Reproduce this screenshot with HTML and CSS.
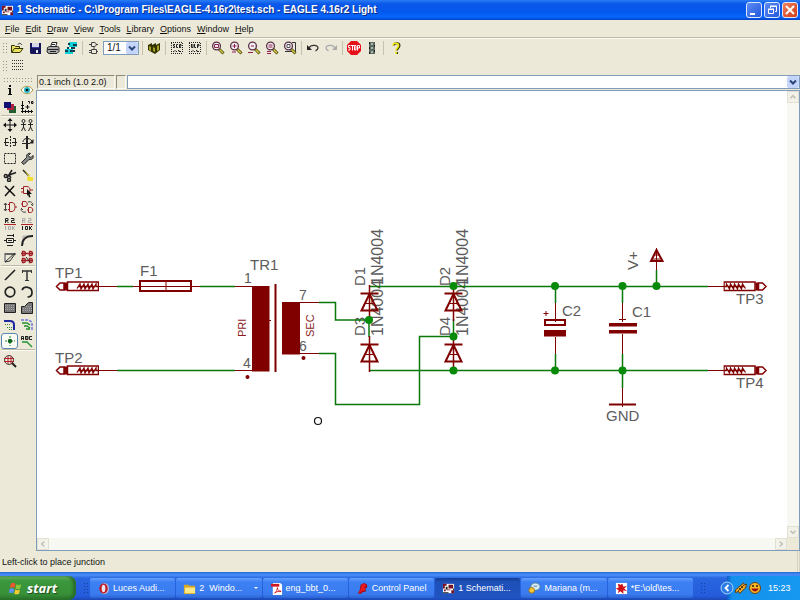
FILE: index.html
```html
<!DOCTYPE html>
<html lang="en">
<head>
<meta charset="utf-8">
<title>1 Schematic - EAGLE 4.16r2 Light</title>
<link rel="stylesheet" href="styles.css">
</head>
<body>
<svg class="defs" aria-hidden="true">
  <symbol id="lens" viewBox="0 0 14 14">
    <path d="M8 8l4.500 4.500" stroke="#4a4a10" stroke-width="3"/>
    <path d="M8.500 8.500l3.500 3.500" stroke="#d8c840" stroke-width="1.500"/>
    <circle cx="5.500" cy="5" r="3.900" fill="#f4eef0" stroke="#5a3048" stroke-width="1.300"/>
  </symbol>
  <symbol id="app" viewBox="0 0 14 14">
    <path fill="#fff" d="M1 2h12v10H1z"/>
    <path fill="#7a1020" d="M1 2h4v2H3v3H1zM7 3h5v4H7zM2 8h2v2H2zM5 8h4v1H5zM10 9h3v3h-3z"/>
    <path fill="#222" d="M4 5h2v3H4zM8 4h1v1H8zM1 11h6v1H1zM12 7h1v2h-1z"/>
  </symbol>
  <symbol id="plug" viewBox="0 0 44 12">
    <g fill="none" stroke="#800000">
      <path stroke-width="1.500" d="M12.500 2h31v8.500h-31z"/>
      <path stroke-width="1.500" d="M9 3H5L1.500 6.500 5 10h4z"/>
      <path stroke-width="3" d="M10.500 2.500v8"/>
      <path stroke-width="1.300" d="M22 8.500l3-4.500 1 5 3-5 1 5 3-5 1 5 3-5 1 5 3-5v2.500h3M23 6.500h16"/>
    </g>
  </symbol>
  <symbol id="diode" viewBox="0 0 20 36">
    <g fill="none" stroke="#800000">
      <path stroke-width="1.500" d="M10 0v36"/>
      <path stroke-width="2" d="M1 8.500h18M10 9L2 25.500h16z"/>
      <path d="M6 18.500h8"/>
    </g>
  </symbol>
</svg>

<header class="titlebar">
  <svg class="app-icon"><use href="#app"/></svg>
  <h1>1 Schematic - C:\Program Files\EAGLE-4.16r2\test.sch - EAGLE 4.16r2 Light</h1>
  <div class="window-buttons">
    <button aria-label="Minimize"><svg viewBox="0 0 14 14"><path fill="#fff" d="M3 10h5v2H3z"/></svg></button>
    <button aria-label="Restore"><svg viewBox="0 0 14 14" fill="none" stroke="#fff"><path d="M5.500 5V3.500h6v5H10M3.500 6.500h5v4h-5z"/><path d="M5 3h7M3 6h6"/></svg></button>
    <button class="close" aria-label="Close"><svg viewBox="0 0 14 14" stroke="#fff" stroke-width="2"><path d="M3 3l8 8M11 3l-8 8"/></svg></button>
  </div>
</header>

<nav class="menubar">
  <button><u>F</u>ile</button><button><u>E</u>dit</button><button><u>D</u>raw</button><button><u>V</u>iew</button><button><u>T</u>ools</button><button><u>L</u>ibrary</button><button><u>O</u>ptions</button><button><u>W</u>indow</button><button><u>H</u>elp</button>
</nav>

<div class="toolbar">
  <i class="grip"></i>
  <button aria-label="Open"><svg viewBox="0 0 14 14"><path fill="#e8e060" stroke="#333300" d="M1.500 11.500v-7h3l1 1h4v2h3.500l-3 4z"/><path d="M2 11l2.500-3.500H13" stroke="#333300" fill="none"/><path d="M8 3.500c1-2 3-1 4 .5" stroke="#222" fill="none"/></svg></button>
  <button aria-label="Save"><svg viewBox="0 0 14 14"><path fill="#15155a" d="M2 2h11v11H3l-1-1z"/><path fill="#d8d8e8" d="M4 2h7v5H4z"/><path fill="#3a3aa0" d="M4 6h7v1H4z"/><path fill="#e8e8e8" d="M8 9h2v3H8z"/></svg></button>
  <button aria-label="Print"><svg viewBox="0 0 14 14"><path fill="#fff" stroke="#222" d="M4.500 6l1.500-4.500h5L9.500 6"/><path fill="#aaa" stroke="#222" d="M1.500 6.500l2-1h8l1.500 1v4l-2 2h-8l-2-1.500z"/><path stroke="#222" d="M2 8.500h10M4 10.500h6M6 3.500h3"/></svg></button>
  <button aria-label="Board"><svg viewBox="0 0 14 14"><path fill="#10d0d8" d="M5 1h8v5H5zM1 8h8v5H1z"/><path fill="#143c50" d="M4 2h2v2H4zM9 3h4v2H9zM7 6h4v2H7zM1 9h3v2H1zM6 9h5v2H6zM3 6h2v2H3z"/></svg></button>
  <i class="sep"></i>
  <button aria-label="Device"><svg viewBox="0 0 14 14" fill="none" stroke="#444"><path d="M4.500 1.500H7c3 0 3 4 0 4H4.500zM2 3.500h2M9 3.500h2M4.500 8.500h5v4h-5zM2 9.500h2M2 11.500h2M10 10.500h1M7 6v2"/></svg></button>
  <span class="combo sheet">
    <select aria-label="Sheet"><option>1/1</option></select>
    <svg viewBox="0 0 12 12"><path d="M3 4.500l3 3 3-3" fill="none" stroke="#294578" stroke-width="2"/></svg>
  </span>
  <i class="sep"></i>
  <button aria-label="Library"><svg viewBox="0 0 14 14"><path fill="#333300" d="M1 4l4-2v2l4-2v2l4-2v7l-5 4-7-4z"/><path fill="#a8a020" d="M2 5l2 1v4L2 9zM6 6l2 1v4L6 10zM10 5l2-1v5l-2 1z"/></svg></button>
  <i class="sep"></i>
  <button aria-label="Script"><svg viewBox="0 0 14 14"><path d="M1 1.500h12M1 12.500h12M1.500 2v10M12.500 2v10" stroke="#222" stroke-dasharray="1 1"/><path fill="none" stroke="#222" d="M5 3.500H3.500v1.500h1v1.500H3M8 3.500H6.500v3H8M9.500 7V3.500H11v1.500H9.500L11 7M3 10.500h1l1-1 1 1h1M8 9.500h1v1h2"/></svg></button>
  <button aria-label="ULP"><svg viewBox="0 0 14 14"><path d="M1 1.500h12M1 12.500h12M1.500 2v10M12.500 2v10" stroke="#222" stroke-dasharray="1 1"/><path fill="none" stroke="#222" d="M3.500 3v3.500H5V3M6.500 3v3.500H8M9.500 7V3.500H11v1.500H9.500M3 10.500h1l1-1 1 1h1M8 9.500h1v1h2"/></svg></button>
  <i class="sep"></i>
  <button aria-label="Zoom fit"><svg viewBox="0 0 14 14"><use href="#lens"/><path stroke="#902050" fill="none" d="M3.500 3.500h4v3h-4z"/></svg></button>
  <button aria-label="Zoom in"><svg viewBox="0 0 14 14"><use href="#lens"/><path stroke="#902050" d="M5.500 3v4M3.500 5h4M3 11h4"/></svg></button>
  <button aria-label="Zoom out"><svg viewBox="0 0 14 14"><use href="#lens"/><path stroke="#902050" d="M4 5h3M1 11.500h5"/></svg></button>
  <button aria-label="Zoom redraw"><svg viewBox="0 0 14 14"><use href="#lens"/><path stroke="#902050" d="M3.500 4h4M3.500 6h4M2 10.500h4M2 12.500h4"/></svg></button>
  <button aria-label="Zoom select"><svg viewBox="0 0 14 14"><path fill="none" stroke="#333" d="M9 1.500h3.500v9H2"/><use href="#lens"/><path stroke="#555" fill="none" d="M4 3.500h3v3H4z"/></svg></button>
  <i class="sep"></i>
  <button aria-label="Undo"><svg viewBox="0 0 14 14"><path fill="none" stroke="#333" stroke-width="1.300" d="M3 7c2-4 9-3 9 0 0 1-1 2-2.500 3"/><path fill="#222" d="M1 4v5h5z"/></svg></button>
  <button aria-label="Redo"><svg viewBox="0 0 14 14"><path fill="none" stroke="#aaa" stroke-width="1.300" d="M11 7c-2-4-9-3-9 0 0 1 1 2 2.500 3"/><path fill="#aaa" d="M13 4v5H8z"/></svg></button>
  <i class="sep"></i>
  <button aria-label="Stop"><svg viewBox="0 0 14 14"><path fill="#e81018" d="M4 0h6l4 4v6l-4 4H4l-4-4V4z"/><path fill="none" stroke="#fff" d="M3.500 4.500h-2v2h1.500v2.500H1M4 4.500h3M5.500 4.500v5M7.500 4.500h1.500v4.500H7.500zM10.500 9.500v-5h2v2.500h-2"/></svg></button>
  <button aria-label="Go"><svg viewBox="0 0 14 14"><path fill="#5a6a60" d="M4 1h6v12H4z"/><path fill="#222" d="M4 1h1v2H4zM9 4h1v2H9zM4 6h1v2H4zM9 9h1v2H9zM4 11h1v2H4z"/><path fill="#a8b8a8" d="M6 2h2v2H6zM6 6h2v2H6zM6 10h2v2H6z"/></svg></button>
  <i class="sep"></i>
  <button aria-label="Help"><svg viewBox="0 0 14 14" fill="none"><path stroke="#333300" stroke-width="2" d="M6 4.500c0-3 5.500-3 5.500 0C11.500 7 9 7 9 9.500M9 11v2"/><path stroke="#f0e810" stroke-width="1.700" d="M5 4.500c0-3 5.500-3 5.500 0C10.500 7 8 7 8 9.500M8 11v2"/></svg></button>
</div>
<div class="toolbar second">
  <i class="grip"></i>
  <button aria-label="Grid"><svg viewBox="0 0 14 14"><path d="M2 1.500h11M2 4.500h11M2 7.500h11M2 10.500h11" stroke="#333" stroke-dasharray="1 1"/></svg></button>
</div>

<div class="workspace">
  <aside class="palette">
    <i class="hgrip"></i>
    <div class="tools two">
      <button aria-label="Info"><svg viewBox="0 0 14 14"><path fill="#111" d="M6 2h2v2H6zM5 5h3v6h1v1H5v-1h1V6H5z"/></svg></button>
      <button aria-label="Show"><svg viewBox="0 0 14 14"><path fill="#fff" stroke="#a89848" d="M1 7c3-5 9-5 12 0-3 5-9 5-12 0z"/><circle cx="7" cy="7" r="3" fill="#20b8c8"/><circle cx="7" cy="7" r="1.300" fill="#111"/></svg></button>
      <button aria-label="Display"><svg viewBox="0 0 14 14"><path fill="#206030" d="M6 6h7v7H6z"/><path fill="#b02040" d="M4 4h7v6H4z"/><path fill="#101070" d="M1 2h7v6H1z"/></svg></button>
      <button aria-label="Mark"><svg viewBox="0 0 14 14" fill="none" stroke="#111"><path d="M2.500 1v12M1 11.500h12M5.500 7h4M7.500 5v4M5.500 10v3M8.500 10v3M11.500 10v3M1 5.500h3M1 8.500h3M9.500 3.500v-2H8M11.500 1.500h1.500v2h-1.500z"/></svg></button>
    </div>
    <hr>
    <div class="tools nine">
      <button aria-label="Move"><svg viewBox="0 0 14 14"><path stroke="#111" d="M7 2v10M2 7h10"/><path fill="#111" d="M7 0l2.500 3h-5zM7 14l2.500-3h-5zM0 7l3-2.500v5zM14 7l-3-2.500v5z"/></svg></button>
      <button aria-label="Copy"><svg viewBox="0 0 14 14" fill="none" stroke="#222"><circle cx="3.500" cy="3" r="1.500"/><circle cx="10.500" cy="3" r="1.500"/><path d="M3.500 5v4M1 6.500h5M3.500 9L1.500 13M3.500 9l2 4M10.500 5v4M8 6.500h5M10.500 9l-2 4M10.500 9l2 4"/></svg></button>
      <button aria-label="Mirror"><svg viewBox="0 0 14 14" fill="none" stroke="#222"><path d="M7.500 1v12" stroke-dasharray="2 1"/><path d="M5 3.500H2.500v7H5M10 3.500h2.500v7H10M1 7.500h5M9 7.500h5"/></svg></button>
      <button aria-label="Rotate"><svg viewBox="0 0 14 14" fill="none" stroke="#222"><path stroke-width="2" d="M7 3v11"/><path d="M2 8.500h8M3 7c0-4 6-5 9-1"/><path fill="#222" stroke="none" d="M13.500 4v4.500H9zM6 1h2v2H6z"/></svg></button>
      <button aria-label="Group"><svg viewBox="0 0 14 14"><path fill="none" stroke="#222" stroke-dasharray="2 1" d="M1.500 2.500h11v10h-11z"/></svg></button>
      <button aria-label="Change"><svg viewBox="0 0 14 14"><path fill="#888" stroke="#222" d="M1.500 11.500l5-5c-.5-3 2-5 4-4l-2 2 1 1.500 1.500.5 2-2c1 3-1.500 4.500-4 4l-5 5z"/></svg></button>
      <button aria-label="Cut"><svg viewBox="0 0 14 14" fill="none" stroke="#222" stroke-width="1.500"><path d="M4 10l5-8M5 7.500l8-3M6 7l2 3"/><circle cx="2.800" cy="8" r="1.500"/><circle cx="6" cy="12" r="1.500"/></svg></button>
      <button aria-label="Paste"><svg viewBox="0 0 14 14"><path stroke="#222" stroke-width="1.500" d="M3 2l6 6"/><path fill="#f0e030" d="M4 2l6 6-1 1zM7 9h6v4H8l-1-2z"/></svg></button>
      <button aria-label="Delete"><svg viewBox="0 0 14 14"><path stroke="#111" stroke-width="1.500" d="M2 2l10 10M11 2L2 12"/></svg></button>
      <button aria-label="Add"><svg viewBox="0 0 14 14"><path fill="none" stroke="#a02028" d="M3.500 2.500H7c4 0 4 7 0 7H3.500zM1 4.500h2M1 8h2M10 6h3"/><path fill="#111" d="M7 5l5 5H9.500l1 3-1.500.5-1-3L7 12z"/></svg></button>
      <button aria-label="Pinswap"><svg viewBox="0 0 14 14" fill="none"><path stroke="#a02028" d="M6.500 2.500H9c4 0 4 9 0 9H6.500zM5 4.500h2M5 9.500h2M12 7h2"/><path stroke="#444" d="M2.500 3v8M1 5l1.500-2L4 5M1 9l1.500 2L4 9"/></svg></button>
      <button aria-label="Gateswap"><svg viewBox="0 0 14 14" fill="none"><path stroke="#a02028" d="M2.500 1.500H5c3 0 3 5 0 5H2.500zM8.500 7.500h2c3 0 3 5 0 5h-2zM1 4h1M7 10h1"/><path stroke="#444" d="M8 2c3-1 5 1 5 3M11 4l2 2M6 12c-3 1-5-1-5-3M3 10L1 8"/></svg></button>
      <button aria-label="Name"><svg viewBox="0 0 14 14" fill="none"><path stroke="#222" d="M2.500 6V1.500h2.500v2H3l2.500 2.500M8 1.500h3v2H8.500v2H12"/><path stroke="#b02028" d="M1 7.500h12"/><path stroke="#aaa" d="M2.500 9v4M5.500 9.500h2v3h-2zM9.500 9v4M12 9l-2 2 2 2"/></svg></button>
      <button aria-label="Value"><svg viewBox="0 0 14 14" fill="none"><path stroke="#aaa" d="M2.500 6V1.500h2.500v2H3l2.500 2.500M8 1.500h3v2H8.500v2H12"/><path stroke="#b02028" d="M1 7.500h12"/><path stroke="#222" d="M2.500 9v4M5.500 9.500h2v3h-2zM9.500 9v4M12 9l-2 2 2 2"/></svg></button>
      <button aria-label="Smash"><svg viewBox="0 0 14 14" fill="none" stroke="#222"><path d="M3.500 5.500h7v4h-7zM1 7.500h2M11 7.500h2M4 2.500h6M4 12.500h6M5 7.500h4M10.500 1v3"/></svg></button>
      <button aria-label="Miter"><svg viewBox="0 0 14 14" fill="none"><path stroke="#aaa" d="M3 12V3h9"/><path stroke="#222" stroke-width="1.800" d="M2 13c0-6 3-10 11-10"/></svg></button>
      <button aria-label="Split"><svg viewBox="0 0 14 14" fill="none"><path stroke="#999" stroke-width="2" d="M2 12V4h10"/><path stroke="#333" d="M2 12L12 3M2 4h11M2 12l5-1 5-7"/></svg></button>
      <button aria-label="Invoke"><svg viewBox="0 0 14 14" fill="none" stroke="#a02028"><path stroke-width="1.300" d="M2.500 1.500H4c2 0 2 4 0 4H2.500zM9.500 1.500H11c2 0 2 4 0 4H9.500zM2.500 8.500H4c2 0 2 4 0 4H2.500zM9.500 8.500H11c2 0 2 4 0 4H9.500zM1 3.500h12M1 10.500h12"/><path stroke="#222" d="M6 7l4 5"/></svg></button>
    </div>
    <hr>
    <div class="tools five">
      <button aria-label="Wire"><svg viewBox="0 0 14 14"><path stroke="#222" stroke-width="1.600" d="M2 12L12 2"/></svg></button>
      <button aria-label="Text"><svg viewBox="0 0 14 14" fill="none" stroke="#333"><path stroke-width="1.500" d="M7 3v9M3 3h8"/><path d="M5 12.500h4M2.500 2v3M11.500 2v3"/></svg></button>
      <button aria-label="Circle"><svg viewBox="0 0 14 14"><circle cx="7" cy="7" r="4.800" fill="none" stroke="#222" stroke-width="1.700"/></svg></button>
      <button aria-label="Arc"><svg viewBox="0 0 14 14"><path fill="none" stroke="#222" stroke-width="1.700" d="M2 5c2-4 10-4 10 2.500 0 3-2 4.500-4.500 4.500"/></svg></button>
      <button aria-label="Rect"><svg viewBox="0 0 14 14"><path fill="#777" stroke="#222" d="M1.500 2.500h11v9h-11z"/><path stroke="#aaa" stroke-dasharray="1 1" d="M2 4.500h10M2 6.500h10M2 8.500h10"/></svg></button>
      <button aria-label="Polygon"><svg viewBox="0 0 14 14"><path fill="#777" stroke="#222" d="M1.500 12.500v-7h3l4-4h4v11z"/><path stroke="#aaa" stroke-dasharray="1 1" d="M6 5.500h6M3 7.500h9M3 9.500h9"/></svg></button>
      <button aria-label="Bus"><svg viewBox="0 0 14 14" fill="none"><path stroke="#2028a0" stroke-width="2" d="M1 4h6c3 0 4 2 4 4v5"/><path stroke="#309040" stroke-dasharray="1 1" d="M2 7.500h6M4 10.500h5M6 12.500h3"/></svg></button>
      <button aria-label="Net"><svg viewBox="0 0 14 14" fill="none"><path stroke="#7078d8" stroke-width="1.500" stroke-dasharray="3 1" d="M1 3h6c3 0 5 2 5 4v6"/><path stroke="#209030" stroke-width="1.500" d="M2 6h5l3 2M4 9h3l3 2M6 12h4"/></svg></button>
      <button class="active" aria-label="Junction"><svg viewBox="0 0 14 14"><path stroke="#209030" d="M7 2v10M2 7h10" stroke-dasharray="2 1"/><circle cx="7" cy="7" r="2.200" fill="#106020"/></svg></button>
      <button aria-label="Label"><svg viewBox="0 0 14 14" fill="none"><path stroke="#222" d="M1.500 6V2.500h2V6M1 4.500h3M5.500 2v3.500H8v-3H5.500M5 4h3M12 2.500H9.500v3H12"/><path stroke="#209030" stroke-width="1.300" d="M2 8h5l5 5"/></svg></button>
    </div>
    <hr>
    <div class="tools one">
      <button aria-label="ERC"><svg viewBox="0 0 14 14" fill="none"><circle cx="6" cy="6" r="4.500" stroke="#444"/><path stroke="#b02028" d="M1 4.500h10M1 7.500h10M5 2v8M8 2v8"/><path stroke="#222" stroke-width="2" d="M9 9l4 4"/></svg></button>
    </div>
  </aside>

  <main>
    <div class="parambar">
      <output class="coords">0.1 inch (1.0 2.0)</output>
      <span class="well"></span>
      <span class="combo command">
        <input type="text" aria-label="Command line">
        <button aria-label="History"><svg viewBox="0 0 12 12"><path d="M3 4.500l3 3 3-3" fill="none" stroke="#294578" stroke-width="2"/></svg></button>
      </span>
    </div>
    <div class="canvas">
      <svg class="sheet-view" viewBox="37 91 750 447" role="img" aria-label="Power supply schematic">
        <g class="label">
          <text x="55" y="278">TP1</text><text x="55" y="363">TP2</text>
          <text x="140" y="276">F1</text><text x="250" y="270">TR1</text>
          <text class="pin" x="244" y="283">1</text><text class="pin" x="243" y="368">4</text>
          <text class="pin" x="299" y="300">7</text><text class="pin" x="299" y="351">6</text>
          <text transform="translate(365 286) rotate(-90)">D1</text>
          <text transform="translate(450 286) rotate(-90)">D2</text>
          <text transform="translate(365 336) rotate(-90)">D3</text>
          <text transform="translate(450 336) rotate(-90)">D4</text>
          <text class="value" transform="translate(383 285) rotate(-90)">1N4004</text>
          <text class="value" transform="translate(383 336) rotate(-90)">1N4004</text>
          <text class="value" transform="translate(468 285) rotate(-90)">1N4004</text>
          <text class="value" transform="translate(468 336) rotate(-90)">1N4004</text>
          <text x="562" y="316">C2</text><text x="632" y="317">C1</text>
          <text transform="translate(638 270) rotate(-90)">V+</text>
          <text x="736" y="304">TP3</text><text x="736" y="388">TP4</text>
          <text x="606" y="421">GND</text>
        </g>
        <g class="winding">
          <text transform="translate(246 337) rotate(-90)">PRI</text>
          <text transform="translate(314 337) rotate(-90)">SEC</text>
        </g>
        <g class="net">
          <path d="M117 286.500h16M200 286.500h35M117 370.500h118"/>
          <path d="M319 302.500h16.500v17.500H369M319 353.500h16.500v51h84v-68H453"/>
          <path d="M369 286.500h339M369 370.500h339M369 319v18M453.500 319v18"/>
          <path d="M555.500 286v17M555.500 354v17M622.500 286v17M622.500 354v34M656.500 270v16"/>
        </g>
        <g class="part">
          <path d="M98 286.500h19M133 286.500h67M235 286.500h18M98 370.500h19M235 370.500h18M708 286.500h17M708 370.500h17"/>
          <path d="M282 302.500h37M282 353.500h37M267 320.500h4M166 282v9"/>
          <path d="M555.500 303v19M555.500 337v17M622.500 303v19M622.500 334v20M622.500 388v19M619 319.500h7"/>
          <path d="M543.500 313.500h5M546 311v5M656.500 248v22M653 255h7M652.500 259h8"/>
          <path class="bold" d="M140 281h51v10h-51zM275.500 284v88M545 320h20v5h-20zM609 404.500h27M656.500 250L651 261h11.500z"/>
        </g>
        <g class="solid">
          <path d="M252 286h17.500v85.500H252zM282 302h18v52.500h-18zM544 330h22v6.500h-22zM609 323h28v3.500h-28zM609 330h28v3.500h-28z"/>
          <circle cx="247.500" cy="377" r="2"/><circle cx="303.500" cy="358" r="2"/>
        </g>
        <use href="#plug" x="55" y="280" width="44" height="12"/>
        <use href="#plug" x="55" y="364" width="44" height="12"/>
        <use href="#plug" transform="translate(767.500 280) scale(-1 1)" width="44" height="12"/>
        <use href="#plug" transform="translate(767.500 364) scale(-1 1)" width="44" height="12"/>
        <use href="#diode" x="359.500" y="285" width="20" height="36"/>
        <use href="#diode" x="359.500" y="336" width="20" height="36"/>
        <use href="#diode" x="443.500" y="285" width="20" height="36"/>
        <use href="#diode" x="443.500" y="336" width="20" height="36"/>
        <g class="junction">
          <circle cx="369" cy="320" r="4"/><circle cx="453.500" cy="286" r="4"/>
          <circle cx="453.500" cy="336.500" r="4"/><circle cx="453.500" cy="370.500" r="4"/>
          <circle cx="555" cy="286" r="4"/><circle cx="555" cy="370.500" r="4"/>
          <circle cx="622.500" cy="286" r="4"/><circle cx="622.500" cy="370.500" r="4"/>
          <circle cx="656.500" cy="286" r="4"/>
        </g>
        <circle cx="318" cy="421" r="3.500" fill="none" stroke="#111" stroke-width="1.200"/>
      </svg>
      <div class="vscroll">
        <button aria-label="Scroll up"><svg viewBox="0 0 12 12"><path d="M3 7.500l3-3 3 3" fill="none" stroke="#c4c2b4" stroke-width="2"/></svg></button>
        <button aria-label="Scroll down"><svg viewBox="0 0 12 12"><path d="M3 4.500l3 3 3-3" fill="none" stroke="#c4c2b4" stroke-width="2"/></svg></button>
      </div>
      <div class="hscroll">
        <button aria-label="Scroll left"><svg viewBox="0 0 12 12"><path d="M7.500 3l-3 3 3 3" fill="none" stroke="#c4c2b4" stroke-width="2"/></svg></button>
        <button aria-label="Scroll right"><svg viewBox="0 0 12 12"><path d="M4.500 3l3 3-3 3" fill="none" stroke="#c4c2b4" stroke-width="2"/></svg></button>
      </div>
      <span class="corner"></span>
    </div>
  </main>
</div>

<div class="status">Left-click to place junction</div>

<footer class="taskbar">
  <button class="start">
    <svg viewBox="0 0 16 16"><path fill="#e8582c" d="M3 3c2-1.500 3-1.200 5 0L7 7.500c-2-1-3-1-5 0z"/><path fill="#8cc83c" d="M9 3.500c2 1 3 1 5 0L13 8c-2 1-3 1-5 0z"/><path fill="#5a94f0" d="M1.700 8.500c2-1.200 3-1 5 0l-1 4.500c-2-1-3-1-5 0z"/><path fill="#f8cc30" d="M7.700 9c2 1 3 1 5 0l-1 4.500c-2 1-3 1-5 0z"/></svg>
    start
  </button>
  <i class="grip"></i>
  <div class="tasks">
    <button><svg viewBox="0 0 14 14"><ellipse cx="8" cy="7" rx="5" ry="6" fill="#b0b8d0"/><ellipse cx="7" cy="7" rx="4.500" ry="5.500" fill="#c01820"/><ellipse cx="7" cy="7" rx="2" ry="4" fill="#e8e8f4"/></svg>Luces Audi...</button>
    <button><svg viewBox="0 0 14 14"><path fill="#d8a828" d="M1 3h5l1 1h6v9H1z"/><path fill="#fce888" d="M2 6h11v6H2z"/></svg>2&nbsp; Windo...<i class="more"></i></button>
    <button><svg viewBox="0 0 14 14"><path fill="#fff" d="M3 1h8l2 2v11H3z"/><path fill="#d01820" d="M1 2h9v3H1z"/><path fill="none" stroke="#d01820" d="M5 12c2-2 3-4 3-6 0 3 2 4 4 4-2 0-5 0-7 2z"/></svg>eng_bbt_0...</button>
    <button><svg viewBox="0 0 14 14"><path fill="#a00810" d="M5 3l4-2 3 2v3l-2 1 1 3-4 1-2 2-3-1 2-3z"/><path fill="#f01820" d="M6 3l3-1 2 2-2 2 1 3-4 1-2 2-1-1 2-3z"/></svg>Control Panel</button>
    <button class="current"><svg><use href="#app"/></svg>1 Schemati...</button>
    <button><svg viewBox="0 0 14 14"><ellipse cx="8" cy="5" rx="5" ry="4" fill="#d8ecf8" stroke="#508098"/><circle cx="4" cy="9" r="3" fill="#f4c838" stroke="#a07010"/><path d="M6 4.500h4" stroke="#508098"/></svg>Mariana (m...</button>
    <button><svg viewBox="0 0 14 14"><path fill="#fff" d="M1 1h12v12H1z"/><path fill="#d01018" d="M3 2l3 1 2-1 1 3 4-1-3 3 3 3-4-1v4l-3-3-3 2 1-3-3-2 3-1z"/></svg>*E:\old\tes...</button>
  </div>
  <i class="grip"></i>
  <div class="tray">
    <button aria-label="Show hidden icons"><svg viewBox="0 0 14 14"><circle cx="7" cy="7" r="6" fill="#2c7ce8" stroke="#a8d4f8"/><path d="M8.500 4L5.500 7l3 3" fill="none" stroke="#fff" stroke-width="1.800"/></svg></button>
    <svg viewBox="0 0 14 14"><path fill="#f0a828" stroke="#604010" d="M1.500 9l8-7 1 2 2-1-1 4-6 5.500-1-2-3 1z"/><path stroke="#604010" d="M4 10l6-6M5 7l2 2M7 5l2 2"/></svg>
    <svg viewBox="0 0 14 14"><circle cx="7" cy="7" r="5.500" fill="#f8b828" stroke="#704010"/><path fill="#a01010" d="M3.500 7.500h7c-1 4-6 4-7 0z"/><path stroke="#301808" stroke-width="1.500" d="M5 4v2M9 4v2"/></svg>
    <time>15:23</time>
  </div>
</footer>
</body>
</html>
```
FILE: styles.css
```css
* { box-sizing: border-box; }

body {
  margin: 0;
  min-height: 100vh;
  display: flex;
  flex-direction: column;
  background: #ece9d8;
  color: #111;
  font: 9px/12px "Liberation Sans", Arial, sans-serif;
}

button, input, select {
  font: inherit;
  color: inherit;
  margin: 0;
  padding: 0;
  border: 0;
  background: none;
  border-radius: 0;
}

svg { display: block; flex: none; }
.defs { position: absolute; width: 0; height: 0; }

/* Title bar */
.titlebar {
  display: flex;
  align-items: center;
  height: 20px;
  padding: 0 2px 0 1px;
  gap: 3px;
  background: linear-gradient(#2a7cf4, #0a58e8 20%, #0458ec 60%, #0568ff 85%, #0340c8);
}
.titlebar h1 {
  flex: 1;
  margin: 0;
  font: bold 10px/20px "Liberation Sans", Arial, sans-serif;
  color: #fff;
  text-shadow: 1px 1px 0 #0a2a80;
  white-space: nowrap;
  overflow: hidden;
}
.app-icon { width: 13px; height: 13px; }
.window-buttons { display: flex; gap: 2px; }
.window-buttons button {
  width: 16px;
  height: 16px;
  border: 1px solid #dce8fc;
  border-radius: 3px;
  background: linear-gradient(135deg, #5c8cf4, #2458dc);
}
.window-buttons .close { background: linear-gradient(135deg, #f08060, #d03c14); }

/* Menu bar */
.menubar {
  display: flex;
  gap: 6px;
  height: 18px;
  padding: 0 5px;
  border-bottom: 1px solid #bdbaa6;
}

/* Toolbars */
.toolbar {
  display: flex;
  align-items: center;
  height: 19px;
  border-top: 1px solid #fbfaf4;
}
.toolbar.second { height: 17px; border: 0; }
.toolbar button { width: 18px; height: 16px; padding: 1px 2px; }
.toolbar button svg { width: 14px; height: 14px; }
.grip {
  width: 5px;
  height: 12px;
  margin: 0 1px 0 2px;
  background: radial-gradient(circle, #9a9884 1px, transparent 1px) 0 0 / 3px 3px;
}
.sep { width: 1px; height: 14px; margin: 0 2px; background: #c5c2b0; }
.combo {
  display: grid;
  grid-template-columns: 1fr auto;
  background: #fff;
  border: 1px solid #7f9db9;
}
.combo svg { width: 12px; height: 12px; background: #c4d4fb; border-radius: 2px; }
.sheet { width: 36px; height: 14px; margin-right: 1px; }
.sheet select {
  grid-area: 1 / 1 / 2 / 3;
  appearance: none;
  padding-left: 3px;
  font-size: 10px;
}
.sheet svg { grid-area: 1 / 2; pointer-events: none; }

/* Work area */
.workspace { flex: 1; display: flex; min-height: 0; }
.palette { width: 36px; padding-top: 3px; }
.hgrip {
  display: block;
  height: 5px;
  margin: 0 3px;
  background: radial-gradient(circle, #9a9884 1px, transparent 1px) 0 0 / 3px 3px;
}
.palette hr { margin: 0 1px; border: 0; border-top: 1px solid #bdbaa6; border-bottom: 1px solid #fbfaf4; }
.tools { display: grid; grid-template-columns: 17px 17px; grid-auto-rows: 1fr; padding-left: 1px; }
.tools.two { height: 33px; }
.tools.nine { height: 148px; }
.tools.five { height: 82px; }
.tools.one { height: 20px; }
.tools button { display: grid; place-items: center; }
.tools svg { width: 14px; height: 14px; }
.tools .active { border: 1px solid #5a86b4; border-radius: 3px; background: #fbfbf6; }

main { flex: 1; min-width: 0; display: flex; flex-direction: column; }
.parambar { display: flex; gap: 1px; padding: 1px 0 1px 1px; height: 16px; }
.coords, .well {
  border: 1px solid;
  border-color: #8d8a78 #fbfaf4 #fbfaf4 #8d8a78;
}
.coords { width: 78px; padding-left: 1px; white-space: nowrap; }
.well { width: 10px; }
.command { flex: 1; }
.command input { min-width: 0; outline: 0; padding: 0 2px; }

.canvas {
  flex: 1;
  min-height: 0;
  display: grid;
  grid-template: minmax(0, 1fr) 12px / minmax(0, 1fr) 12px;
  border: 1px solid #7f9db9;
  background: #fff;
}
.sheet-view { width: 100%; height: 100%; }
.vscroll, .hscroll { display: flex; justify-content: space-between; background: #f8f8f3; }
.vscroll { flex-direction: column; }
.canvas button { width: 12px; height: 12px; border: 1px solid #e2e0d2; background: #f3f2ea; }
.corner { background: #ece9d8; }

.label { font-size: 15px; fill: #5c5c5c; }
.label .pin { font-size: 14px; }
.label .value { font-size: 16px; }
.winding { font-size: 11px; fill: #8c1c1c; }
.net { fill: none; stroke: #0a780a; stroke-width: 1.5; }
.part { fill: none; stroke: #800000; }
.part .bold { stroke-width: 2; }
.solid { fill: #800000; }
.junction { fill: #078a07; }

.status { height: 21px; padding: 5px 2px; border-right: 3px double #d6d3c2; }

/* Taskbar */
.taskbar {
  display: flex;
  align-items: stretch;
  height: 28px;
  padding-top: 4px;
  background: linear-gradient(#2866d8, #4a90f8 10%, #2a66e0 22%, #245cdc 85%, #1c48b4);
  color: #fff;
}
.start {
  display: flex;
  align-items: center;
  gap: 4px;
  width: 76px;
  padding-left: 8px;
  border-radius: 0 8px 8px 0;
  background: linear-gradient(#6cb46c, #3c983c 20%, #389038 75%, #287028);
  box-shadow: inset -3px 0 3px #286c28;
  font: italic bold 13px/20px "Open Sans", sans-serif;
  text-shadow: 1px 1px 1px #1c4c1c;
}
.start svg { width: 15px; height: 15px; }
.taskbar .grip { align-self: center; margin: 0 2px 0 7px; background: radial-gradient(circle, #1a3c9c 1px, transparent 1px) 0 0 / 3px 3px; }
.tasks { flex: 1; display: flex; gap: 1px; padding: 2px 0; }
.tasks button {
  flex: 1 1 0;
  max-width: 100px;
  min-width: 0;
  display: flex;
  align-items: center;
  gap: 3px;
  padding: 0 4px 0 7px;
  border-radius: 2px;
  background: linear-gradient(#64a0fc, #3c80f4 20%, #3a7cf0 80%, #2c64d4);
  white-space: nowrap;
}
.tasks .current { background: linear-gradient(#143c94, #1e50b8 20%, #2054c0); }
.tasks svg { width: 13px; height: 13px; }
.more { margin-left: auto; border: 2px solid transparent; border-top-color: #fff; border-bottom: 0; }
.tray {
  display: flex;
  align-items: center;
  gap: 0;
  width: 80px;
  margin-left: 13px;
  background: linear-gradient(90deg, transparent 7px, #0c5cc8 7px, #1490ec 12px, #1698f0);
}
.tray svg { width: 14px; height: 14px; }
.tray time { margin-left: 6px; }
```
